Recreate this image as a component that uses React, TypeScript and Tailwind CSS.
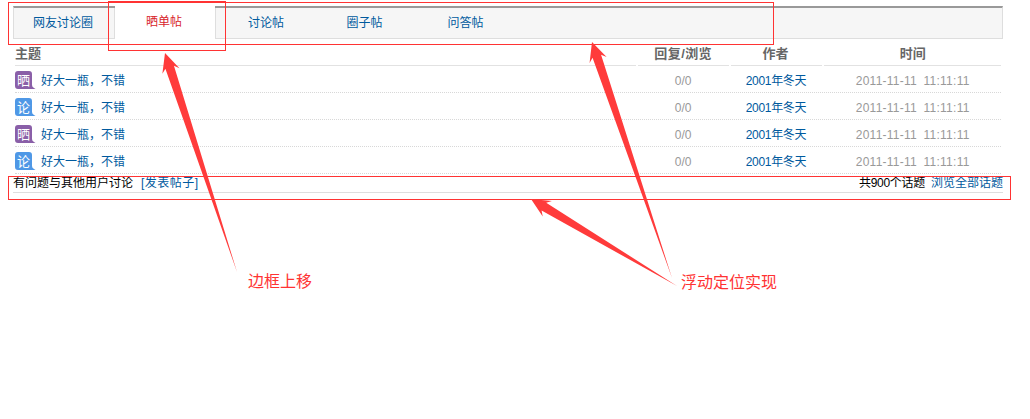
import React from 'react';

const FONT = "font-['Liberation_Sans','Noto_Sans_CJK_SC',sans-serif]";

const rows = [
  { tag: '晒', color: '#8a5fa8' },
  { tag: '论', color: '#4f98e6' },
  { tag: '晒', color: '#8a5fa8' },
  { tag: '论', color: '#4f98e6' },
];

function TagIcon({ tag, color }: { tag: string; color: string }) {
  return (
    <svg width="21" height="18" viewBox="0 0 21 18" className="shrink-0">
      <path d="M3 0H14Q17 0 17 3V14Q17 16 19 17L20.500 18H3Q0 18 0 15V3Q0 0 3 0Z" fill={color} />
      <text x="8.500" y="14" fontSize="13" fill="#fff" textAnchor="middle">{tag}</text>
    </svg>
  );
}

function Row({ tag, color }: { tag: string; color: string }) {
  return (
    <div className="flex h-[27px] items-center border-b border-dotted border-[#d8d8d8] pt-[2px]">
      <div className="flex w-[622px] items-center gap-[5px]">
        <TagIcon tag={tag} color={color} />
        <a className="pt-[2px] text-[#005a9e]">好大一瓶，不错</a>
      </div>
      <div className="ml-[2px] w-[91px] pt-[2px] text-center text-[#999]">0/0</div>
      <div className="ml-[2px] w-[92px] pr-[1px] pt-[2px] text-center tracking-[-0.3px] text-[#005a9e]">2001年冬天</div>
      <div className="ml-[2px] w-[177px] pt-[2px] text-center tracking-[0.25px] text-[#999] [word-spacing:3px]">2011-11-11 11:11:11</div>
    </div>
  );
}

function Arrow({ tip, tail }: { tip: [number, number]; tail: [number, number] }) {
  const dx = tail[0] - tip[0];
  const dy = tail[1] - tip[1];
  const len = Math.hypot(dx, dy);
  const ux = dx / len;
  const uy = dy / len;
  const at = (d: number, w: number) => `${tip[0] + ux * d - uy * w},${tip[1] + uy * d + ux * w}`;
  return (
    <polygon
      points={[tip.join(','), at(19, 9), at(15, 4.500), tail.join(','), at(15, -4.500), at(19, -9)].join(' ')}
      fill="#ff3b3b"
    />
  );
}

export default function App() {
  return (
    <div className={`relative h-[419px] w-[1030px] overflow-hidden bg-white text-[12px] ${FONT}`}>
      <div className="px-[13px] pt-[6px]">
        <div className="w-[990px]">
          {/* tabs */}
          <div className="flex h-[33px] border border-t-2 border-[#dedede] border-t-[#999] bg-[#f6f6f6]">
            <div className="flex w-[101px] items-center justify-center border-r border-[#dedede] pr-[2px] text-[#005a9e]">网友讨论圈</div>
            <div className="relative -mt-[2px] flex h-[33px] w-[100px] items-center justify-center bg-white pb-[2px] pr-[2px] text-[#d8232a]">晒单帖</div>
            <div className="flex w-[99px] items-center justify-center border-l border-[#dedede] pl-[2px] text-[#005a9e]">讨论帖</div>
            <div className="flex w-[101px] items-center justify-center text-[#005a9e]">圈子帖</div>
            <div className="flex w-[101px] items-center justify-center text-[#005a9e]">问答帖</div>
          </div>

          {/* list */}
          <div className="ml-[2px] w-[986px]">
            <div className="flex h-[27px] text-[13px] font-bold text-[#666]">
              <div className="w-[622px] border-b border-[#e2e2e2] pt-[5px]">主题</div>
              <div className="ml-[2px] w-[91px] border-b border-[#e2e2e2] pt-[5px] text-center tracking-[0.4px]">回复/浏览</div>
              <div className="ml-[2px] w-[92px] border-b border-[#e2e2e2] pr-[2px] pt-[5px] text-center">作者</div>
              <div className="ml-[2px] w-[177px] border-b border-[#e2e2e2] pt-[5px] text-center">时间</div>
            </div>
            {rows.map((r, i) => (
              <Row key={i} tag={r.tag} color={r.color} />
            ))}
          </div>

          {/* footer */}
          <div className="flex h-[19px] items-center justify-between border-b border-[#dedede] text-black">
            <div>
              有问题与其他用户讨论<a className="ml-[8px] tracking-[0.5px] text-[#005a9e]">[发表帖子]</a>
            </div>
            <div>
              <span className="tracking-[-0.3px]">共900个话题</span><a className="ml-[6px] text-[#005a9e]">浏览全部话题</a>
            </div>
          </div>
        </div>
      </div>

      {/* annotations */}
      <div className="absolute left-[8px] top-[2px] h-[43px] w-[766px] border border-[#f33]" />
      <div className="absolute left-[108px] top-[1px] h-[50px] w-[118px] border border-[#f33] border-t-2" />
      <div className="absolute left-[8px] top-[176px] h-[24px] w-[1003px] border border-[#f33]" />
      <svg width="1030" height="419" className="absolute left-0 top-0">
        <Arrow tip={[165, 53]} tail={[237, 272]} />
        <Arrow tip={[592, 42]} tail={[672, 278]} />
        <Arrow tip={[531, 199]} tail={[677, 286]} />
      </svg>
      <div className="absolute left-[248px] top-[272px] text-[16px] leading-[20px] text-[#f33]">边框上移</div>
      <div className="absolute left-[681px] top-[273px] text-[16px] leading-[20px] text-[#f33]">浮动定位实现</div>
    </div>
  );
}
